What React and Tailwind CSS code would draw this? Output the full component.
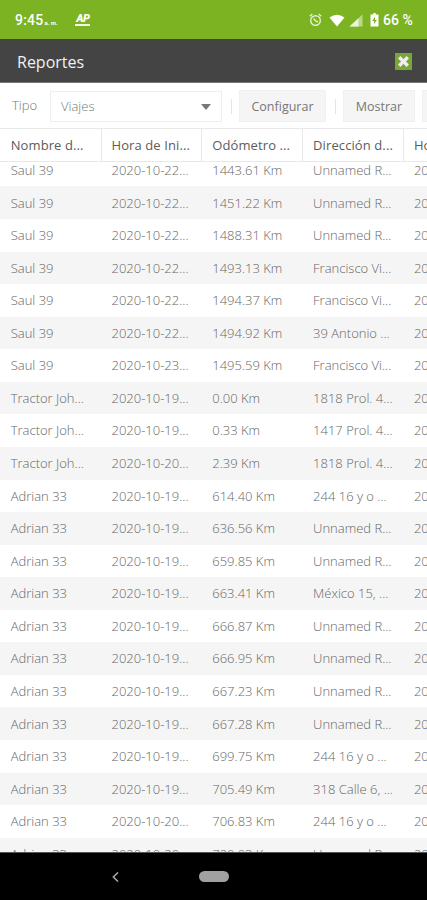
import React from "react";

const columns = ["Nombre d...", "Hora de Ini...", "Odómetro ...", "Dirección d...", "Ho"];

const rows = [
  ["Saul 39", "2020-10-22...", "1443.61 Km", "Unnamed R..."],
  ["Saul 39", "2020-10-22...", "1451.22 Km", "Unnamed R..."],
  ["Saul 39", "2020-10-22...", "1488.31 Km", "Unnamed R..."],
  ["Saul 39", "2020-10-22...", "1493.13 Km", "Francisco Vi..."],
  ["Saul 39", "2020-10-22...", "1494.37 Km", "Francisco Vi..."],
  ["Saul 39", "2020-10-22...", "1494.92 Km", "39 Antonio ..."],
  ["Saul 39", "2020-10-23...", "1495.59 Km", "Francisco Vi..."],
  ["Tractor Joh...", "2020-10-19...", "0.00 Km", "1818 Prol. 4..."],
  ["Tractor Joh...", "2020-10-19...", "0.33 Km", "1417 Prol. 4..."],
  ["Tractor Joh...", "2020-10-20...", "2.39 Km", "1818 Prol. 4..."],
  ["Adrian 33", "2020-10-19...", "614.40 Km", "244 16 y o ..."],
  ["Adrian 33", "2020-10-19...", "636.56 Km", "Unnamed R..."],
  ["Adrian 33", "2020-10-19...", "659.85 Km", "Unnamed R..."],
  ["Adrian 33", "2020-10-19...", "663.41 Km", "México 15, ..."],
  ["Adrian 33", "2020-10-19...", "666.87 Km", "Unnamed R..."],
  ["Adrian 33", "2020-10-19...", "666.95 Km", "Unnamed R..."],
  ["Adrian 33", "2020-10-19...", "667.23 Km", "Unnamed R..."],
  ["Adrian 33", "2020-10-19...", "667.28 Km", "Unnamed R..."],
  ["Adrian 33", "2020-10-19...", "699.75 Km", "244 16 y o ..."],
  ["Adrian 33", "2020-10-19...", "705.49 Km", "318 Calle 6, ..."],
  ["Adrian 33", "2020-10-20...", "706.83 Km", "244 16 y o ..."],
  ["Adrian 33", "2020-10-20...", "720.03 Km", "Unnamed R..."],
];

function StatusBar() {
  return (
    <div className="flex h-[39px] shrink-0 items-center bg-[#7bb322] pl-[15px] pr-[14px] pt-px font-['Roboto',sans-serif] text-white">
      <span className="text-[14px] font-medium leading-none tracking-[0.2px]">9:45</span>
      <span className="ml-[1px] mt-[6px] text-[6px] font-bold leading-none">a. m.</span>
      <div className="ml-[17px] flex w-[16px] flex-col items-center">
        <span className="text-[11px] font-black italic leading-[9px] tracking-[-0.5px]">AP</span>
        <div className="mt-px h-[1.5px] w-[15px] bg-white/90" />
      </div>
      <div className="ml-auto flex items-center">
        <svg className="h-[14px] w-[13px]" viewBox="0 0 13 14" fill="none" stroke="#e5f2cf" strokeWidth="1.4">
          <circle cx="6.5" cy="7.5" r="4.8" />
          <path d="M.8 3.3 3.3 1M12.2 3.3 9.7 1M4.5 5.5l2 2.3L9 9" />
        </svg>
        <svg className="ml-[7px] h-[13px] w-[16px]" viewBox="0 0 17 13" fill="white">
          <path d="M.5 3.2Q8.5-2.2 16.5 3.2L8.5 12.8Z" />
        </svg>
        <svg className="ml-[4px] h-[13px] w-[14px]" viewBox="0 0 14 13">
          <path d="M.5 12.5 13.5.5v12z" fill="#b9d987" />
          <path d="M.5 12.5 9.5 4.2v8.3z" fill="#e9f4d8" />
        </svg>
        <svg className="ml-[7px] h-[14px] w-[9px]" viewBox="0 0 9 14">
          <path d="M3 .3h3v1.2h2.5v12h-8v-12H3z" fill="white" />
          <path d="M5 3.7 2.3 8h1.8v3.2L6.8 7H5z" fill="#7bb322" />
        </svg>
        <span className="ml-[4px] whitespace-nowrap text-[14px] font-medium leading-none tracking-[0.1px]">66 %</span>
      </div>
    </div>
  );
}

function Toolbar() {
  return (
    <div className="flex h-[45px] shrink-0 items-center overflow-hidden pl-[12px] pt-px text-[13px]">
      <span className="w-[38px] shrink-0 text-[13px] font-light text-[#777]">Tipo</span>
      <div className="flex h-[31px] w-[172px] shrink-0 items-center justify-between border border-[#eee] pl-[10px] pr-[10px] pt-[2px] font-light text-[#777]">
        <span>Viajes</span>
        <svg className="h-[6px] w-[10px]" viewBox="0 0 10 6" fill="#777">
          <path d="M0 0h10L5 6z" />
        </svg>
      </div>
      <div className="ml-[9px] h-[15px] w-px shrink-0 bg-[#e4e4e4]" />
      <button className="ml-[7px] h-[32px] w-[87px] shrink-0 border border-[#f0f0f0] bg-[#f5f5f5] pt-[2px] text-[12.5px] text-[#777]">Configurar</button>
      <div className="ml-[9px] h-[15px] w-px shrink-0 bg-[#e4e4e4]" />
      <button className="ml-[7px] h-[32px] w-[72px] shrink-0 border border-[#f0f0f0] bg-[#f5f5f5] pt-[2px] text-[12.5px] text-[#777]">Mostrar</button>
      <div className="ml-[7px] h-[32px] w-[72px] shrink-0 border border-[#f0f0f0] bg-[#f5f5f5]" />
    </div>
  );
}

function ReportTable() {
  return (
    <>
      <div className="flex h-[34px] shrink-0 overflow-hidden border-y border-[#e8e8e8] bg-white text-[13px] text-[#5c5c5c]">
        {columns.map((name, i) => (
          <div
            key={name}
            className="flex w-[100.8px] shrink-0 items-center whitespace-nowrap border-r border-[#e8e8e8] pl-[9.9px] pt-px tracking-[0.1px] first:w-[101.6px] first:pl-[10.7px]"
          >
            {name}
          </div>
        ))}
      </div>
      <div className="min-h-0 flex-1 overflow-hidden">
        <div className="-mt-[8.1px]">
          {rows.map((row, i) => (
            <div key={i} className="flex h-[32.57px] items-center text-[13px] font-light text-[#666] odd:bg-white even:bg-[#f5f5f5]">
              {[...row, "20"].map((cell, j) => (
                <div key={j} className="w-[100.8px] shrink-0 whitespace-nowrap pl-[10.7px] pt-px">
                  {cell}
                </div>
              ))}
            </div>
          ))}
        </div>
      </div>
    </>
  );
}

export default function App() {
  return (
    <div className="flex h-[900px] w-[427px] flex-col overflow-hidden bg-white font-['Open_Sans',sans-serif]">
      <StatusBar />
      <header className="flex h-[44px] shrink-0 items-center justify-between border-b border-[#777] bg-[#444] pl-[17px] pr-[15px] pt-[2px] text-[#f1f1f1]">
        <h1 className="text-[16px] font-normal">Reportes</h1>
        <button aria-label="Cerrar" className="flex h-[17px] w-[17px] items-center justify-center bg-[#79a832]">
          <svg className="h-[11px] w-[11px]" viewBox="0 0 11 11" stroke="#eeeeee" strokeWidth="3.4">
            <path d="m1.2 1.2 8.6 8.6M9.8 1.2 1.2 9.8" />
          </svg>
        </button>
      </header>
      <Toolbar />
      <ReportTable />
      <nav className="flex h-[48px] shrink-0 items-center border-t border-[#555] bg-black pl-[112px]">
        <svg className="h-[10px] w-[7px]" viewBox="0 0 7 10" fill="none" stroke="#aaa" strokeWidth="1.5">
          <path d="M6 .5 1.3 5 6 9.5" />
        </svg>
        <div className="ml-[80px] h-[11px] w-[30px] rounded-full bg-[#a0a0a0]" />
      </nav>
    </div>
  );
}
